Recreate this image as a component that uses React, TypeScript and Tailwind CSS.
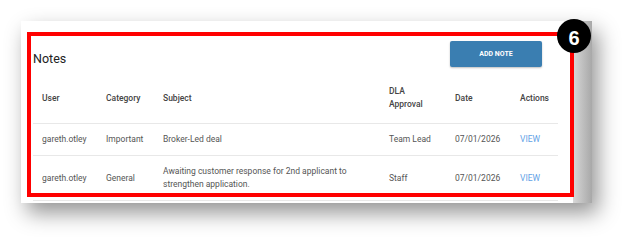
const notes = [
  {
    user: "gareth.otley",
    category: "Important",
    subject: "Broker-Led deal",
    approval: "Team Lead",
    date: "07/01/2026",
  },
  {
    user: "gareth.otley",
    category: "General",
    subject: "Awaiting customer response for 2nd applicant to strengthen application.",
    approval: "Staff",
    date: "07/01/2026",
  },
];

export default function App() {
  return (
    <div className="relative h-[246px] w-[634px] overflow-hidden bg-white pl-[21px] pt-[21px] font-['Roboto',sans-serif]">
      <div className="flex h-[182px] w-[571px] shadow-[6px_10px_20px_rgba(0,0,0,0.42)]">
        <div className="w-[552px] bg-white pl-[12px] pr-[15px] pt-[20px]">
          <div className="flex items-start justify-between">
            <h1 className="mt-[10px] text-[12.5px] leading-[16px] text-[#222]">Notes</h1>
            <button className="mr-[16px] h-[26px] w-[92px] rounded-[2px] bg-[#3a7eb1] text-[7px] font-bold text-white shadow-[0_1px_2px_rgba(0,0,0,0.25)]">
              ADD NOTE
            </button>
          </div>

          <table className="w-[525px] table-fixed border-collapse text-left text-[8.5px] leading-[13px]">
            <colgroup>
              <col className="w-[64px]" />
              <col className="w-[57px]" />
              <col className="w-[226px]" />
              <col className="w-[66px]" />
              <col className="w-[65px]" />
              <col className="w-[47px]" />
            </colgroup>
            <thead>
              <tr className="border-b border-[#e8e8e8] text-[#444]">
                <th className="px-[9px] pb-[12px] pt-[18px] align-middle font-medium">User</th>
                <th className="px-[9px] pb-[12px] pt-[18px] align-middle font-medium">Category</th>
                <th className="px-[9px] pb-[12px] pt-[18px] align-middle font-medium">Subject</th>
                <th className="px-[9px] pb-[12px] pt-[18px] align-middle font-medium">
                  DLA
                  <br />
                  Approval
                </th>
                <th className="px-[9px] pb-[12px] pt-[18px] align-middle font-medium">Date</th>
                <th className="px-[9px] pb-[12px] pt-[18px] align-middle font-medium">Actions</th>
              </tr>
            </thead>
            <tbody className="text-[#555]">
              {notes.map((n, i) => (
                <tr key={i} className="border-b border-[#e8e8e8]">
                  <td className="px-[9px] py-[9px] align-middle">{n.user}</td>
                  <td className="px-[9px] py-[9px] align-middle">{n.category}</td>
                  <td className="px-[9px] py-[9px] align-middle">{n.subject}</td>
                  <td className="px-[9px] py-[9px] align-middle">{n.approval}</td>
                  <td className="px-[9px] py-[9px] align-middle">{n.date}</td>
                  <td className="px-[9px] py-[9px] align-middle text-[#5fa2e6]">VIEW</td>
                </tr>
              ))}
            </tbody>
          </table>
        </div>
        <div className="w-[19px] bg-gradient-to-r from-[#d8d8d8] to-[#a8a8a8]" />
      </div>

      {/* annotation overlay */}
      <div className="absolute left-[27px] top-[32px] h-[165px] w-[547px] border-[4px] border-[#ff0000]" />
      <div className="absolute left-[557px] top-[19px] flex h-[34px] w-[34px] items-center justify-center rounded-full bg-black pt-[3px] font-['Liberation_Sans',sans-serif] text-[20px] font-bold leading-none text-white">
        6
      </div>
    </div>
  );
}
